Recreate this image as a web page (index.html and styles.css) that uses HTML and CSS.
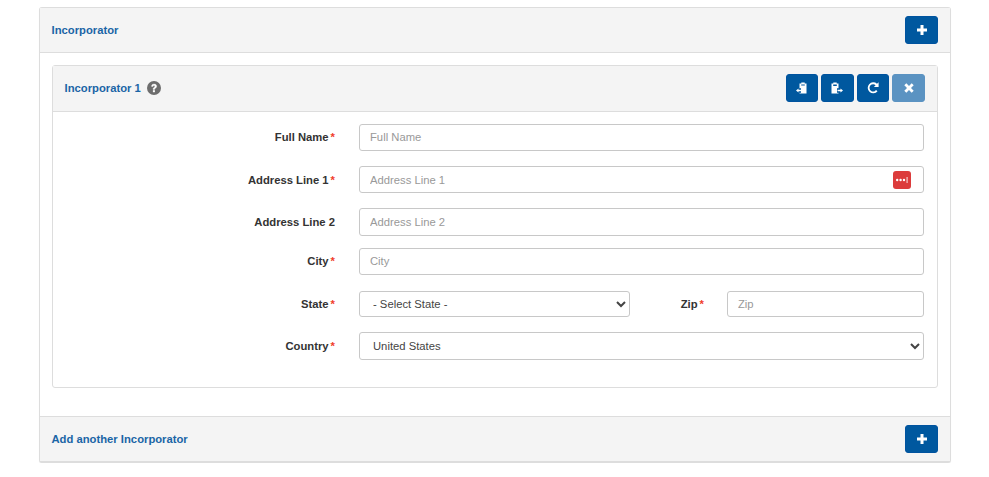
FILE: index.html
```html
<!DOCTYPE html>
<html lang="en">
<head>
    <meta charset="UTF-8">
    <meta name="viewport" content="width=device-width, initial-scale=1.0">
    <title>Incorporator</title>
    <link rel="stylesheet" href="styles.css">
</head>
<body>

    <section class="panel">
        <header class="panel-head">
            <h2>Incorporator</h2>
            <button class="btn btn-add" type="button" aria-label="Add">
                <svg class="icon" viewBox="0 0 12 12"><path d="M4.500 1h3v3.500H11v3H7.500V11h-3V7.500H1v-3h3.500z"/></svg>
            </button>
        </header>

        <div class="panel-body">
            <section class="card">
                <header class="card-head">
                    <div class="card-title">
                        <h3>Incorporator 1</h3>
                        <svg class="help" viewBox="0 0 14 14" aria-label="Help">
                            <circle cx="7" cy="7" r="7" fill="#6d6d6d"/>
                            <path d="M4.500 5.400C4.600 3.800 5.600 3 7.100 3c1.500 0 2.600.9 2.600 2.200 0 1.100-.6 1.600-1.300 2.100-.5.3-.7.6-.7 1.100H6c0-1 .3-1.500 1-2 .5-.3.9-.6.9-1.100 0-.5-.4-.8-.9-.8-.6 0-.9.3-1 .9z" fill="#fff" stroke="#fff" stroke-width=".3"/>
                            <rect x="5.900" y="9.200" width="2" height="2" fill="#fff"/>
                        </svg>
                    </div>
                    <div class="card-actions">
                        <button class="btn" type="button" aria-label="Paste in">
                            <svg class="icon" viewBox="0 0 12 12">
                                <path d="M3.500 1.500h1.800V.5h3.400v1h1.800v10h-7z"/>
                                <path class="cut" d="M5.200 2.600h3.600v.9H5.200zM0 6.300h5v4.400H0z"/>
                                <path d="M0 8.500l2.500-2v1.300h2.700v1.400H2.500v1.300z"/>
                            </svg>
                        </button>
                        <button class="btn" type="button" aria-label="Copy out">
                            <svg class="icon" viewBox="0 0 12 12">
                                <path d="M.5 1.500h1.800V.5h3.400v1h1.800v10H.5z"/>
                                <path class="cut" d="M2.200 2.600h3.600v1.400H2.200zM6 6.300h6v4.400H6z"/>
                                <path d="M12 8.500l-2.500-2v1.300h-3v1.400h3v1.300z"/>
                            </svg>
                        </button>
                        <button class="btn" type="button" aria-label="Reset">
                            <svg class="icon" viewBox="1 1 12 12">
                                <path d="M12.600 1.200v4.700H7.900l1.700-1.700A3.600 3.600 0 0 0 3.500 7a3.600 3.600 0 0 0 6.500 2.100l1.500 1.200A5.500 5.500 0 1 1 11 2.800z"/>
                            </svg>
                        </button>
                        <button class="btn btn-off" type="button" aria-label="Remove">
                            <svg class="icon" viewBox="0 0 12 12"><path d="M3.300 1.300 6 4l2.700-2.700 2 2L8 6l2.700 2.700-2 2L6 8l-2.700 2.700-2-2L4 6 1.300 3.300z"/></svg>
                        </button>
                    </div>
                </header>

                <form class="form">
                    <div class="row row-up">
                        <label class="label">Full Name<span class="req">*</span></label>
                        <input class="field" type="text" placeholder="Full Name">
                    </div>
                    <div class="row">
                        <label class="label">Address Line 1<span class="req">*</span></label>
                        <div class="field-wrap">
                            <input class="field" type="text" placeholder="Address Line 1">
                            <span class="pw-badge">
                                <svg viewBox="0 0 18 18"><rect width="18" height="18" rx="3" fill="#dc3c3c"/><circle cx="4.200" cy="9" r="1.200" fill="#fff"/><circle cx="7.600" cy="9" r="1.200" fill="#fff"/><circle cx="11" cy="9" r="1.200" fill="#fff"/><rect x="13.500" y="6" width="1.200" height="6" fill="#f3c9c9"/></svg>
                            </span>
                        </div>
                    </div>
                    <div class="row row-tall">
                        <label class="label">Address Line 2</label>
                        <input class="field" type="text" placeholder="Address Line 2">
                    </div>
                    <div class="row row-close row-up">
                        <label class="label">City<span class="req">*</span></label>
                        <input class="field" type="text" placeholder="City">
                    </div>
                    <div class="row row-short">
                        <label class="label">State<span class="req">*</span></label>
                        <select class="field select state">
                            <option>- Select State -</option>
                        </select>
                        <label class="label label-zip">Zip<span class="req">*</span></label>
                        <input class="field zip" type="text" placeholder="Zip">
                    </div>
                    <div class="row row-tall">
                        <label class="label">Country<span class="req">*</span></label>
                        <select class="field select">
                            <option>United States</option>
                        </select>
                    </div>
                </form>
            </section>
        </div>

        <footer class="panel-foot">
            <h2>Add another Incorporator</h2>
            <button class="btn btn-add" type="button" aria-label="Add">
                <svg class="icon" viewBox="0 0 12 12"><path d="M4.500 1h3v3.500H11v3H7.500V11h-3V7.500H1v-3h3.500z"/></svg>
            </button>
        </footer>
    </section>

</body>
</html>
```

FILE: styles.css
```css
body {
    font-family: "Liberation Sans", Arial, sans-serif;
    font-size: 12px;
    margin: 0;
    padding: 7px 38px 0 39px;
    background-color: #ffffff;
    color: #333333;
}

h2,
h3 {
    margin: 0;
    font-size: 11.25px;
    font-weight: bold;
    color: #1a65a6;
}

.panel {
    border: 1px solid #dddddd;
    border-bottom-width: 2px;
    border-radius: 3px;
    background-color: #ffffff;
    box-shadow: 0 1px 1px rgba(0, 0, 0, 0.05);
}

.panel-head,
.panel-foot {
    display: flex;
    align-items: center;
    justify-content: space-between;
    padding: 0 12px 0 11.5px;
    background-color: #f4f4f4;
}

.panel-head {
    height: 44px;
    border-bottom: 1px solid #dddddd;
}

.panel-foot {
    height: 44px;
    border-top: 1px solid #dddddd;
}

.panel-body {
    padding: 12px 12px 28px 12px;
}

.card {
    border: 1px solid #dddddd;
    border-radius: 3px;
}

.card-head {
    display: flex;
    align-items: center;
    justify-content: space-between;
    height: 44px;
    padding: 0 12px 1px 11.5px;
    background-color: #f4f4f4;
    border-bottom: 1px solid #dddddd;
}

.card-title {
    display: flex;
    align-items: center;
    gap: 6px;
}

.help {
    width: 14px;
    height: 14px;
}

.card-actions {
    display: flex;
    gap: 3px;
}

.btn {
    display: flex;
    align-items: center;
    justify-content: center;
    width: 32.5px;
    height: 28px;
    padding: 0;
    border: 1px solid #00539f;
    border-radius: 3px;
    background-color: #00589f;
    cursor: pointer;
}

.btn-add {
    width: 33px;
}

.btn-off {
    width: 33px;
    border-color: #5b93c2;
    background-color: #5b93c2;
}

.icon {
    width: 12px;
    height: 12px;
    fill: #ffffff;
}

.icon .cut {
    fill: #00589f;
}

.form {
    display: flex;
    flex-direction: column;
    gap: 15px;
    padding: 12px 13px 27px 0;
}

.row {
    display: flex;
    align-items: center;
    height: 27px;
}

.row-tall {
    height: 28px;
}

.row-close {
    margin-top: -3px;
}

.row-short {
    height: 26px;
    margin-top: 1px;
}

.row-up .label {
    margin-bottom: 2px;
}

.row-up .field {
    padding-bottom: 2px;
}

.label {
    flex: 0 0 282px;
    text-align: right;
    font-size: 11.25px;
    font-weight: bold;
    color: #333333;
}

.req {
    margin-left: 2px;
    color: #f0402a;
    font-weight: bold;
}

.row .label {
    margin-right: 24px;
}

.field {
    flex: 1;
    box-sizing: border-box;
    height: 100%;
    min-width: 0;
    padding: 0 10px;
    border: 1px solid #c8c8c8;
    border-radius: 3px;
    background-color: #ffffff;
    font-family: inherit;
    font-size: 11.25px;
    color: #444444;
}

.field::placeholder {
    color: #999999;
    opacity: 1;
}

.field-wrap {
    position: relative;
    flex: 1;
    display: flex;
    height: 100%;
}

.pw-badge {
    position: absolute;
    top: 5px;
    right: 13px;
    width: 18px;
    height: 18px;
}

.select {
    padding-left: 9px;
}

.state {
    flex: 0 0 271px;
}

.row .label-zip {
    flex: 0 0 auto;
    width: 74px;
    margin-right: 23px;
}

.zip {
    flex: 0 0 197px;
}
```
